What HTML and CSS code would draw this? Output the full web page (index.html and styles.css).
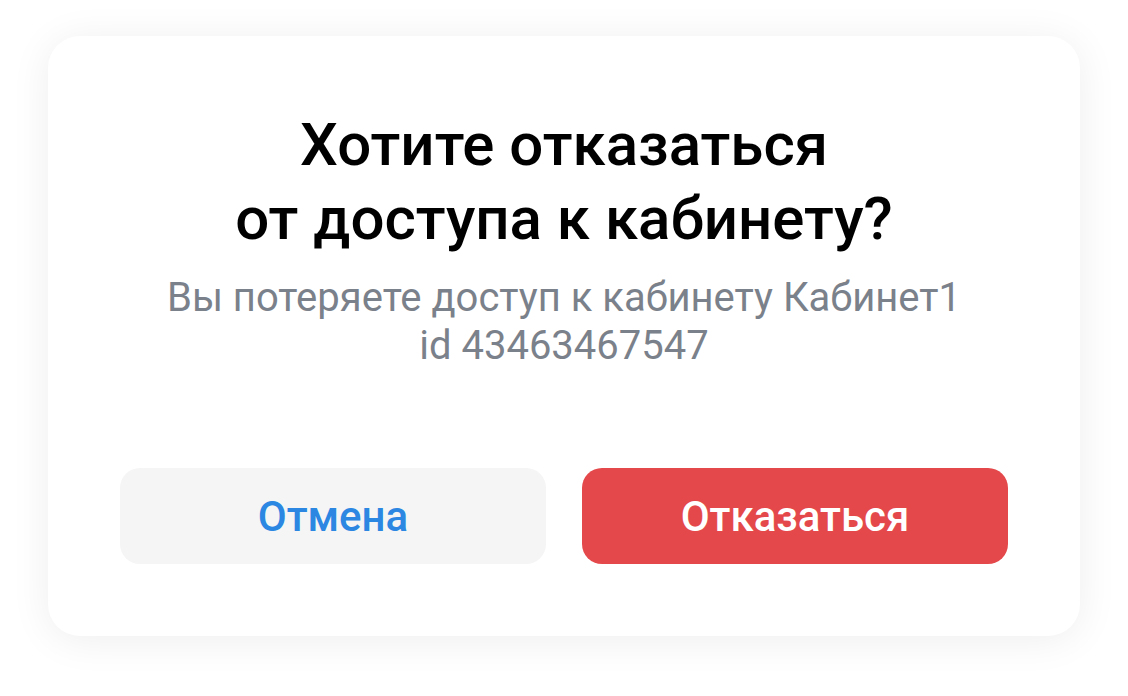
FILE: index.html
```html
<!DOCTYPE html>
<html lang="ru">
<head>
<meta charset="utf-8">
<link rel="stylesheet" href="styles.css">
</head>
<body>
<div class="card">
  <h1 class="title">Хотите отказаться<br>от доступа к кабинету?</h1>
  <p class="text">Вы потеряете доступ к кабинету Кабинет1<br>id 43463467547</p>
  <div class="actions">
    <button class="btn btn-cancel">Отмена</button>
    <button class="btn btn-danger">Отказаться</button>
  </div>
</div>
</body>
</html>
```

FILE: styles.css
```css
html, body {
  margin: 0;
  background: #ffffff;
}
body {
  padding: 36px 48px;
  font-family: Roboto, "Noto Sans", sans-serif;
}
.card {
  width: 1032px;
  height: 600px;
  box-sizing: border-box;
  background: #ffffff;
  border-radius: 32px;
  box-shadow: 0 4px 40px rgba(0, 0, 0, 0.07);
  padding: 72px 72px 72px;
  display: flex;
  flex-direction: column;
  align-items: center;
}
.title {
  margin: 0;
  font-size: 60px;
  line-height: 74px;
  font-weight: 500;
  color: #000000;
  text-align: center;
}
.text {
  margin: 18px 0 0;
  font-size: 40px;
  line-height: 48px;
  color: #7b818a;
  text-align: center;
}
.actions {
  margin-top: auto;
  width: 100%;
  display: flex;
  gap: 36px;
}
.btn {
  flex: 1;
  height: 96px;
  border: none;
  border-radius: 20px;
  font-family: Roboto, "Noto Sans", sans-serif;
  font-size: 42px;
  font-weight: 500;
}
.btn-cancel {
  background: #f5f5f5;
  color: #2b87e2;
}
.btn-danger {
  background: #e5484a;
  color: #ffffff;
}
```
